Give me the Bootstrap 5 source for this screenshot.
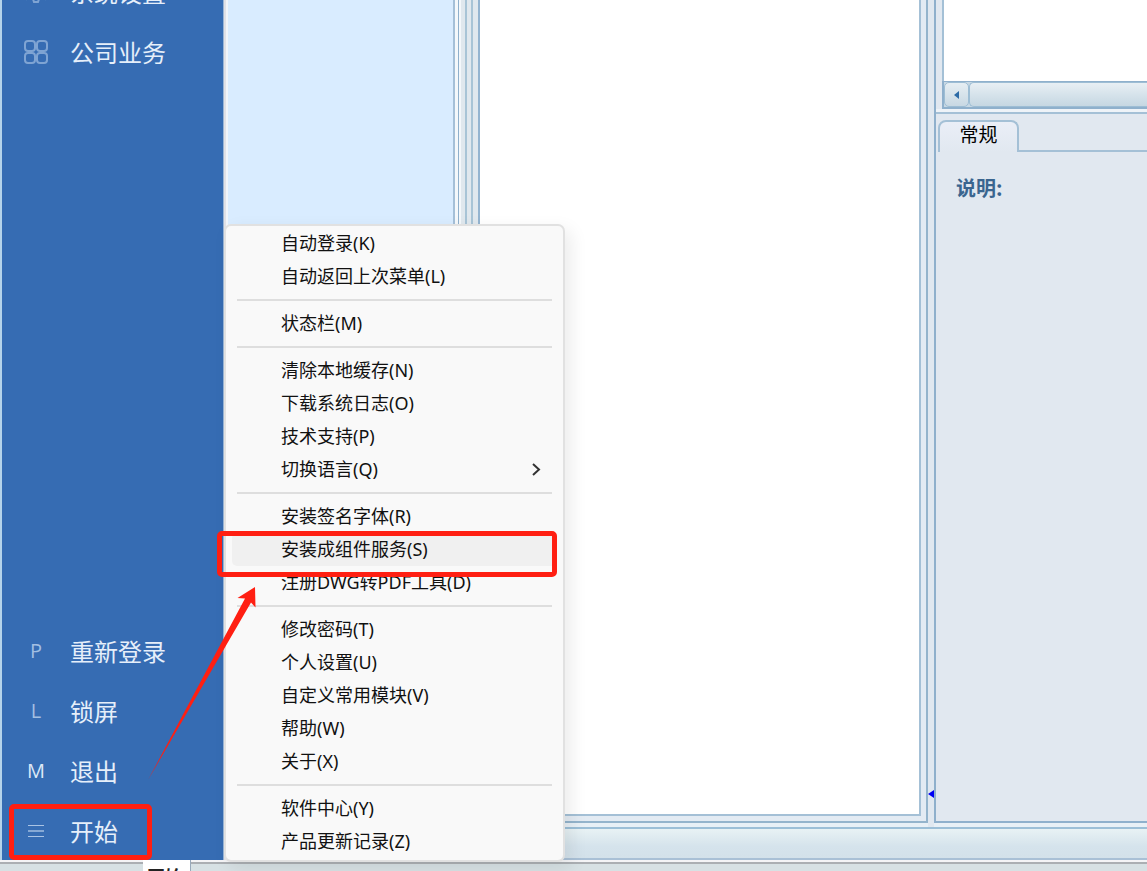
<!DOCTYPE html>
<html lang="zh-CN">
<head>
<meta charset="utf-8">
<meta name="viewport" content="width=device-width, initial-scale=1">
<title>系统</title>
<link rel="stylesheet" href="https://cdn.jsdelivr.net/npm/bootstrap@5.3.0/dist/css/bootstrap.min.css">
<style>
  :root { --line: #a4c0d6; --line-dark: #8fb0cc; --panel: #e1e8f0; --red: #ff1f12; }
  body { font-family: "Noto Sans", "Noto Sans CJK SC", sans-serif; color: #111; background: #fff; }
  /* left navigation */
  .side { width: 228px; background: #366cb3; border-left: 2px solid #b5d3ea; padding: 0; }
  .side::after { content: ""; position: absolute; right: 0; top: 0; bottom: 0; width: 5px;
    background: linear-gradient(90deg, #9bb6d6 0 1px, #e1e1e6 1px 3px, #f1f5fa 3px); }
  .side-item { height: 60px; padding: 2px 0 0 20px; gap: 20px; color: #e6effa; font: 400 24px/36px "Noto Sans CJK SC", sans-serif; text-decoration: none; }
  .side-ico { width: 28px; flex: none; text-align: center; color: #a3bfe2; font: 20px/28px "Open Sans", sans-serif; }
  .side-ico svg { display: block; margin: auto; }
  .side-top { margin-top: -39px; }
  .m-bright { color: #dde8f6; }
  .tree { width: 225px; background: #d9ecff; }
  .split { width: 27px; background: linear-gradient(90deg, #a5c0d8 0 2px, #f4f8fb 2px 5px, #8fb0cc 5px 6px, #f4f8fb 6px 8px, #e0e8ee 8px 12px, #a8c4d6 12px 14px, #e0e8ee 14px 18px, #a8c4d6 18px 20px, #e0e8ee 20px 25px, #94b4d0 25px); }
  .canvas-frame { border: solid #94b4cc; border-width: 0 2px 2px 0; padding: 0 5px 5px 0; background: #e3ebf3; }
  .canvas { background: #fff; border: solid var(--line); border-width: 0 2px 2px 0; }
  .gutter { width: 6px; background: #e0e8f0; }
  .work { background: #e8f0f6; }
  .inspector { width: 213px; border: solid #8fb0cc; border-width: 0 0 2px 2px; background: var(--panel); }
  .grid-view { height: 81px; margin-left: 6px; border-left: 2px solid var(--line); background: #fff; }
  .hbar { height: 28px; margin-left: 6px; border: solid var(--line-dark); border-width: 1px 0 2px 2px; background: #c7d8e4; }
  .hbar-btn { width: 25px; border: 1px solid #9dbdd4; border-radius: 5px; background: linear-gradient(#e6eef3, #c8d8e3); padding: 0; }
  .hbar-thumb { border: 1px solid #9dbdd4; border-right: 0; border-radius: 5px 0 0 5px; background: linear-gradient(#e8eff4, #d6e3eb 50%, #c6d7e2); }
  .hline { height: 5px; border-bottom: 2px solid var(--line); background: #eef3f8; }
  .tabs { height: 38px; padding: 6px 0 0 2px; }
  .tab-on { width: 81px; border: 2px solid var(--line); border-bottom: 0; border-radius: 8px 8px 0 0; background: linear-gradient(#eaeef7, #e1e8f0); font: 19px/24px "Noto Sans CJK SC", sans-serif; color: #000; padding: 0 0 6px; }
  .tab-rest { border-bottom: 2px solid var(--line); }
  .desc { padding: 22px 0 0 20px; font: 700 20px/28px "Noto Sans CJK SC", sans-serif; color: #3a658f; }
  .status { height: 33px; border-top: 2px solid #9cbfd7; border-bottom: 2px solid #a9c0d6; background: linear-gradient(#e8f2f4, #d5e3ec 60%, #d3e1ea); }
  .taskbar { height: 11px; border-top: 2px solid #f4f4f6; background: linear-gradient(#abafb3 0 2px, #d7e1e4 2px); }
  /* start menu */
  .start-menu { left: 224px; bottom: 9px; width: 341px; padding: 1px 6px 2px; border: 2px solid #e1e1e1; border-radius: 7px; background: #f9f9f9; box-shadow: 6px 6px 18px rgba(0,0,0,.08); z-index: 5; }
  .start-menu .dropdown-item { height: 33px; padding: 0 8px 0 49px; font-size: 18px; line-height: 33px; color: #111; border-radius: 5px; }
  .start-menu .dropdown-divider { margin: 6px 5px; border-top: 2px solid #dedede; opacity: 1; }
  .start-menu .hot { background: #f0f0f0; }
  .mark-box { border: 5px solid var(--red); border-radius: 5px; z-index: 7; pointer-events: none; }
  .mark-start { left: 7px; width: 143px; top: 4px; height: 56px; }
  .mark-item { left: -15px; right: 0; top: -2px; height: 46px; }
  .arrow { left: 148px; bottom: 90px; z-index: 8; }
  .tip { left: 143px; top: 860px; width: 48px; height: 26px; padding-left: 4px; background: #fff; border-right: 1px solid #9ab; font: 700 18px/32px "Noto Sans CJK SC", sans-serif; color: #222; z-index: 9; }
  .collapse-mark { right: 0; bottom: 29px; }
</style>
</head>
<body class="vh-100 overflow-hidden position-relative d-flex flex-column">
<div class="d-flex flex-grow-1 position-relative" style="min-height:0">
  <nav class="side position-relative d-flex flex-column flex-shrink-0">
    <a href="#" class="side-item side-top d-flex align-items-center"><span class="side-ico"><svg width="26" height="26" viewBox="0 0 26 26" fill="none" stroke="#7fa4d3" stroke-width="2"><circle cx="13" cy="13" r="4"/><path d="M11 3h4l1 3 3 1 3-1 2 4-2 3 2 3-2 4-3-1-3 1-1 3h-4l-1-3-3-1-3 1-2-4 2-3-2-3 2-4 3 1 3-1z"/></svg></span>系统设置</a>
    <a href="#" class="side-item d-flex align-items-center"><span class="side-ico"><svg width="26" height="26" viewBox="0 0 26 26" fill="none" stroke="#7fa4d3" stroke-width="2"><rect x="2" y="2" width="10" height="10" rx="3"/><rect x="14" y="2" width="10" height="10" rx="3"/><rect x="2" y="14" width="10" height="10" rx="3"/><rect x="14" y="14" width="10" height="10" rx="3"/></svg></span>公司业务</a>
    <div class="mt-auto">
      <a href="#" class="side-item d-flex align-items-center"><span class="side-ico">P</span>重新登录</a>
      <a href="#" class="side-item d-flex align-items-center"><span class="side-ico">L</span>锁屏</a>
      <a href="#" class="side-item d-flex align-items-center"><span class="side-ico m-bright">M</span>退出</a>
      <a href="#" class="side-item d-flex align-items-center position-relative"><span class="side-ico"><svg width="16" height="14" viewBox="0 0 16 14" fill="none" stroke="#a9c3e4" stroke-width="1"><path d="M0 1.5h16M0 12.5h16"/><path d="M0 7h16" stroke="#86a9d5" stroke-width="2"/></svg></span>开始<span class="mark-box mark-start position-absolute"></span></a>
    </div>
  </nav>
  <div class="flex-grow-1 d-flex flex-column" style="min-width:0">
    <main class="work d-flex flex-grow-1">
      <div class="tree flex-shrink-0"></div>
      <div class="split flex-shrink-0"></div>
      <section class="canvas-frame flex-grow-1 d-flex mb-1"><div class="canvas flex-grow-1"></div></section>
      <div class="gutter flex-shrink-0 position-relative">
        <svg class="collapse-mark position-absolute" width="6" height="8" viewBox="0 0 6 8"><path d="M6 0v8L0 4z" fill="#0000f5"/></svg>
      </div>
      <aside class="inspector flex-shrink-0 mb-1">
        <div class="grid-view"></div>
        <div class="hbar d-flex">
          <button class="hbar-btn d-flex align-items-center justify-content-center" type="button" aria-label="向左滚动"><svg width="5" height="8" viewBox="0 0 5 8"><path d="M5 0v8L0 4z" fill="#2d6ba6"/></svg></button>
          <div class="hbar-thumb flex-grow-1"></div>
        </div>
        <div class="hline"></div>
        <div class="tabs d-flex"><button type="button" class="tab-on">常规</button><div class="tab-rest flex-grow-1"></div></div>
        <div class="desc">说明:</div>
      </aside>
    </main>
    <div class="status"></div>
  </div>
</div>
<footer class="taskbar flex-shrink-0"></footer>

<div class="start-menu position-absolute">
  <a href="#" class="dropdown-item">自动登录(K)</a>
  <a href="#" class="dropdown-item">自动返回上次菜单(L)</a>
  <hr class="dropdown-divider">
  <a href="#" class="dropdown-item">状态栏(M)</a>
  <hr class="dropdown-divider">
  <a href="#" class="dropdown-item">清除本地缓存(N)</a>
  <a href="#" class="dropdown-item">下载系统日志(O)</a>
  <a href="#" class="dropdown-item">技术支持(P)</a>
  <a href="#" class="dropdown-item d-flex justify-content-between align-items-center">切换语言(Q)<svg class="me-2" width="9" height="13" viewBox="0 0 9 13" fill="none" stroke="#333" stroke-width="2"><path d="M1 1l6 5.500-6 5.500"/></svg></a>
  <hr class="dropdown-divider">
  <a href="#" class="dropdown-item">安装签名字体(R)</a>
  <a href="#" class="dropdown-item hot position-relative">安装成组件服务(S)<span class="mark-box mark-item position-absolute"></span></a>
  <a href="#" class="dropdown-item">注册DWG转PDF工具(D)</a>
  <hr class="dropdown-divider">
  <a href="#" class="dropdown-item">修改密码(T)</a>
  <a href="#" class="dropdown-item">个人设置(U)</a>
  <a href="#" class="dropdown-item">自定义常用模块(V)</a>
  <a href="#" class="dropdown-item">帮助(W)</a>
  <a href="#" class="dropdown-item">关于(X)</a>
  <hr class="dropdown-divider">
  <a href="#" class="dropdown-item">软件中心(Y)</a>
  <a href="#" class="dropdown-item">产品更新记录(Z)</a>
</div>
<svg class="arrow position-absolute" width="109" height="195" viewBox="0 0 109 195"><path d="M107 1L89.500 12l7.500.5L0 194 103 16.500l4.500 5z" fill="#ff1f12"/></svg>
<div class="tip position-absolute">开始</div>
<script src="https://cdn.jsdelivr.net/npm/bootstrap@5.3.0/dist/js/bootstrap.bundle.min.js"></script>
</body>
</html>
